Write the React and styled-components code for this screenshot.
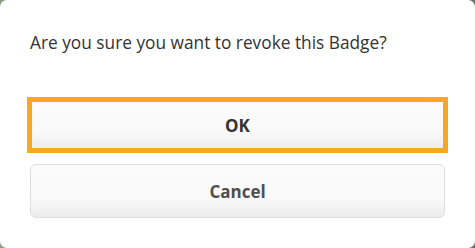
import React from 'react'
import styled, { createGlobalStyle } from 'styled-components'

const GlobalStyle = createGlobalStyle`
    html, body {
        margin: 0;
        padding: 0;
        background: linear-gradient(90deg, #8f9a86 0%, #7d7d7d 60%, #6f6f6f 100%);
    }
`;

const App = () => {
    const onConfirm = () => {}
    const onCancel = () => {}
    return (
        <>
            <GlobalStyle />
            <Dialog>
                <Message>Are you sure you want to revoke this Badge?</Message>
                <Actions>
                    <Button focused onClick={onConfirm}>OK</Button>
                    <Button tall onClick={onCancel}>Cancel</Button>
                </Actions>
            </Dialog>
        </>
    )
}

export default App;

const Dialog = styled.div`
    box-sizing: border-box;
    width: 475px;
    height: 248px;
    padding: 31px 30px 0 30px;
    background: #ffffff;
    border-radius: 7px;
    font-family: 'Open Sans', 'Liberation Sans', sans-serif;
`;

const Message = styled.p`
    margin: 0;
    font-size: 17.3px;
    line-height: 24px;
    color: #333333;
`;

const Actions = styled.div`
    display: flex;
    flex-direction: column;
    gap: 14px;
    margin-top: 45px;
`;

const Button = styled.button`
    box-sizing: border-box;
    width: 415px;
    height: ${props => props.tall ? '54px' : '50px'};
    padding: 0;
    font-family: 'Open Sans', 'Liberation Sans', sans-serif;
    font-size: 17px;
    font-weight: 700;
    color: ${props => props.focused ? '#333333' : '#4f4f4f'};
    background: linear-gradient(180deg, #fbfbfb 0%, #f9f9f9 65%, #ececec 100%);
    border: 1px solid ${props => props.focused ? '#f7a823' : '#dedede'};
    border-radius: ${props => props.focused ? '0' : '6px'};
    outline: ${props => props.focused ? '5px solid #f7a823' : 'none'};
    outline-offset: -2px;
    cursor: pointer;
`;
